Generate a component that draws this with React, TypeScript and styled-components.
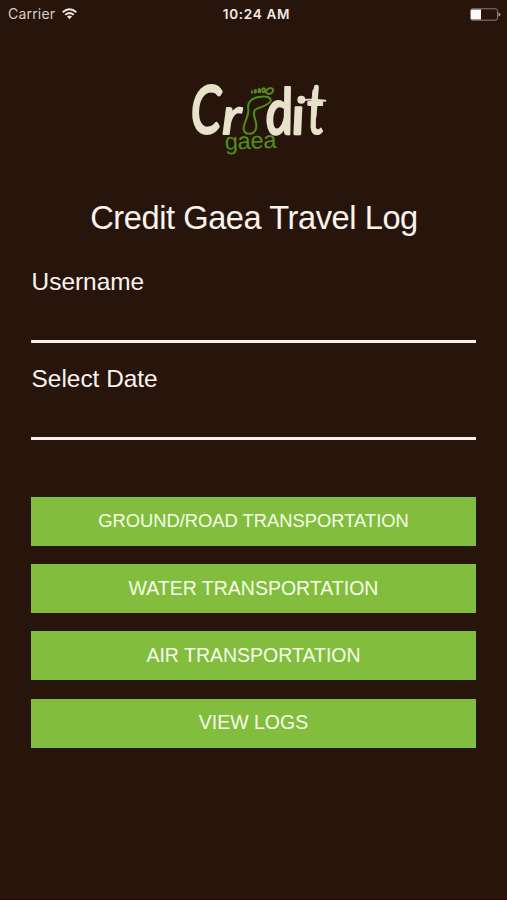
import React from 'react';
import styled, { createGlobalStyle } from 'styled-components';

const GlobalStyle = createGlobalStyle`
  * { box-sizing: border-box; }
  body { margin: 0; background: #27150c; }
`;

const Screen = styled.main`
  display: flex;
  flex-direction: column;
  width: 507px;
  height: 900px;
  background: #27150c;
  border-bottom: 1px solid #2b0509;
  color: #fbf3ee;
  font-family: 'Liberation Sans', Arial, sans-serif;
  overflow: hidden;
`;

const StatusBar = styled.header`
  display: grid;
  grid-template-columns: 1fr auto 1fr;
  align-items: center;
  height: 28px;
  padding: 0 6px 0 8px;
  font-family: Inter, sans-serif;
  font-size: 14px;
  line-height: 28px;
`;

const Carrier = styled.div`
  display: flex;
  align-items: center;
  gap: 7px;
  color: #d9cec8;
  letter-spacing: 0.2px;
`;

const Time = styled.div`
  font-weight: 600;
  font-size: 13.5px;
  letter-spacing: 0.7px;
  color: #f3e9e4;
  padding-left: 4px;
`;

const Battery = styled.svg`
  justify-self: end;
`;

const Logo = styled.svg`
  display: block;
  margin: 47px 0 0 180px;
  flex: none;
`;

const Title = styled.h1`
  margin: 34px 0 0;
  padding-left: 1px;
  font-size: 32.6px;
  font-weight: 400;
  line-height: 38px;
  letter-spacing: -0.42px;
  text-align: center;
  white-space: nowrap;
`;

const Form = styled.form`
  display: flex;
  flex-direction: column;
  padding: 0 31px;
  margin-top: 30px;
`;

const Field = styled.label`
  display: flex;
  flex-direction: column;
  height: 97px;
  font-size: 24.4px;
  line-height: 30px;
`;

const FieldName = styled.span`
  padding-left: 0.6px;
`;

const Input = styled.input`
  height: 46px;
  width: 100%;
  padding: 0;
  border: 0;
  border-bottom: 3px solid #f8eff0;
  border-radius: 0;
  outline: none;
  background: transparent;
  color: inherit;
  font: inherit;
`;

const Actions = styled.div`
  display: grid;
  grid-template-rows: repeat(4, 49px);
  row-gap: 18.2px;
  margin-top: 36px;
`;

const Action = styled.button<{ $size: number }>`
  padding: 0 0 1px;
  border: 0;
  background: #82bd3e;
  color: #f6fde9;
  font-family: inherit;
  font-size: ${({ $size }) => $size}px;
  white-space: nowrap;
`;

const actions = [
  { label: 'GROUND/ROAD TRANSPORTATION', size: 18.35 },
  { label: 'WATER TRANSPORTATION', size: 19.5 },
  { label: 'AIR TRANSPORTATION', size: 19.5 },
  { label: 'VIEW LOGS', size: 19.5 },
];

function WifiIcon() {
  return (
    <svg width="15" height="12" viewBox="0 0 15 12" fill="none" stroke="#f1e7e1" strokeWidth="1.9">
      <path d="M.7 4.2Q7.5-1.8 14.3 4.2" />
      <path d="M3.2 6.9Q7.5 3 11.8 6.9" />
      <path d="M5 8.6Q7.5 6.6 10 8.6L7.5 11.2Z" fill="#f1e7e1" stroke="none" />
    </svg>
  );
}

function BrandLogo() {
  return (
    <Logo width="160" height="90" viewBox="0 0 480 270" role="img" aria-label="Credit Gaea">
      <g fill="#e9e2cb" stroke="#e9e2cb" strokeLinejoin="round" fontFamily="Lato, sans-serif" fontStyle="italic">
        <text x="33" y="175" fontSize="197" strokeWidth="9" textLength="90" lengthAdjust="spacingAndGlyphs">C</text>
        <text x="126" y="177" fontSize="154" strokeWidth="6" textLength="58" lengthAdjust="spacingAndGlyphs">r</text>
        <text transform="translate(262 177) skewX(5)" fontSize="190" strokeWidth="8" textLength="82" lengthAdjust="spacingAndGlyphs">d</text>
        <text transform="translate(338 177) skewX(5)" fontSize="158" strokeWidth="7" textLength="40" lengthAdjust="spacingAndGlyphs">ı</text>
        <text transform="translate(384 177) skewX(4)" fontSize="198" strokeWidth="3" textLength="54" lengthAdjust="spacingAndGlyphs">t</text>
      </g>
      <path d="M364 75Q396 72 436 77" fill="none" stroke="#e9e2cb" strokeWidth="6" strokeLinecap="round" />
      <path d="M409 37L402 125" stroke="#e9e2cb" strokeWidth="15" strokeLinecap="round" />
      <circle cx="364" cy="74" r="12" fill="#e9e2cb" />
      <g fill="none" stroke="#4f8d17" strokeWidth="6" strokeLinecap="round" strokeLinejoin="round">
        <path d="M231 101C246 96 268 89 272 78C274 66 258 62 236 66C210 71 201 85 205 105C207 124 190 143 191 162C194 182 220 180 227 164C234 147 223 134 222 118Q221 104 231 101" />
        <ellipse cx="269" cy="48" rx="11" ry="8" transform="rotate(-28 269 48)" />
        <ellipse cx="251" cy="46" rx="4" ry="6" />
        <ellipse cx="238" cy="47" rx="3" ry="5" />
        <ellipse cx="226" cy="49" rx="2" ry="4" />
        <ellipse cx="216" cy="51" rx="1" ry="2" />
      </g>
      <text x="135" y="224" transform="rotate(-2 135 224)" fill="#508e16" fontFamily="'Liberation Sans', sans-serif" fontSize="71" textLength="155" lengthAdjust="spacing">gaea</text>
    </Logo>
  );
}

export default function App() {
  return (
    <>
      <GlobalStyle />
      <Screen>
        <StatusBar>
          <Carrier>Carrier <WifiIcon /></Carrier>
          <Time>10:24 AM</Time>
          <Battery width="31" height="13" viewBox="0 0 31 13">
            <rect x=".5" y=".8" width="27" height="11.4" rx="2" fill="none" stroke="#8b7d76" />
            <path d="M2 1.5h9v10H2q-1 0-1-1v-8q0-1 1-1Z" fill="#fffafa" />
            <path d="M28.5 4.5q2 .3 2 2t-2 2Z" fill="#a99c95" />
          </Battery>
        </StatusBar>
        <BrandLogo />
        <Title>Credit Gaea Travel Log</Title>
        <Form onSubmit={(event) => event.preventDefault()}>
          <Field><FieldName>Username</FieldName><Input aria-label="Username" /></Field>
          <Field><FieldName>Select Date</FieldName><Input aria-label="Select Date" /></Field>
          <Actions>
            {actions.map(({ label, size }) => (
              <Action key={label} type="button" $size={size}>{label}</Action>
            ))}
          </Actions>
        </Form>
      </Screen>
    </>
  );
}
